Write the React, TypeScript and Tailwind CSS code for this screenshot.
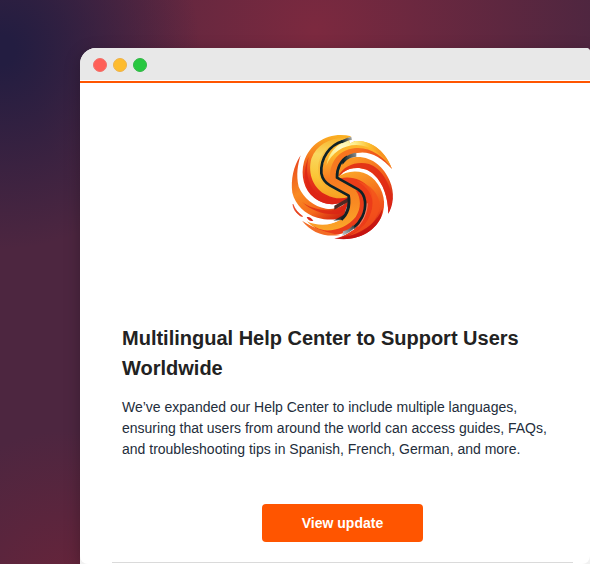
import React from 'react';

interface Update {
  title: string;
  description: string;
  href: string;
}

const update: Update = {
  title: 'Multilingual Help Center to Support Users Worldwide',
  description:
    'We’ve expanded our Help Center to include multiple languages, ensuring that users from around the world can access guides, FAQs, and troubleshooting tips in Spanish, French, German, and more.',
  href: '#update',
};

const Logo: React.FC = () => {
  return (
    <svg viewBox="0 0 375 375" className="w-[125px] h-[125px]" fill="none" aria-hidden="true">
      <defs>
        <linearGradient id="leftOuter" x1="60" y1="90" x2="190" y2="285" gradientUnits="userSpaceOnUse">
          <stop offset="0" stopColor="#e9431c" />
          <stop offset="0.4" stopColor="#f98a22" />
          <stop offset="0.7" stopColor="#f56a1c" />
          <stop offset="1" stopColor="#c9150f" />
        </linearGradient>
        <linearGradient id="leftBand" x1="160" y1="30" x2="130" y2="240" gradientUnits="userSpaceOnUse">
          <stop offset="0" stopColor="#fbb022" />
          <stop offset="0.35" stopColor="#f57a20" />
          <stop offset="0.65" stopColor="#e7361b" />
          <stop offset="1" stopColor="#d91c12" />
        </linearGradient>
        <linearGradient id="yellow" x1="170" y1="40" x2="150" y2="215" gradientUnits="userSpaceOnUse">
          <stop offset="0" stopColor="#f7b52e" />
          <stop offset="0.3" stopColor="#f9d860" />
          <stop offset="0.7" stopColor="#fbc535" />
          <stop offset="1" stopColor="#f7a022" />
        </linearGradient>
        <radialGradient id="glow" cx="188" cy="72" r="115" gradientUnits="userSpaceOnUse">
          <stop offset="0" stopColor="#fffbd2" />
          <stop offset="0.35" stopColor="#fdee8c" />
          <stop offset="0.7" stopColor="#fbc02f" />
          <stop offset="1" stopColor="#f79421" />
        </radialGradient>
        <linearGradient id="topBand" x1="160" y1="160" x2="335" y2="130" gradientUnits="userSpaceOnUse">
          <stop offset="0" stopColor="#f77a20" />
          <stop offset="0.5" stopColor="#f6701f" />
          <stop offset="1" stopColor="#ea421b" />
        </linearGradient>
        <linearGradient id="rightBand" x1="230" y1="100" x2="325" y2="260" gradientUnits="userSpaceOnUse">
          <stop offset="0" stopColor="#fb9724" />
          <stop offset="0.5" stopColor="#f25a1d" />
          <stop offset="1" stopColor="#c61515" />
        </linearGradient>
        <linearGradient id="body" x1="210" y1="140" x2="270" y2="330" gradientUnits="userSpaceOnUse">
          <stop offset="0" stopColor="#fba428" />
          <stop offset="0.35" stopColor="#f6761f" />
          <stop offset="0.7" stopColor="#ef4a1b" />
          <stop offset="1" stopColor="#c31110" />
        </linearGradient>
        <linearGradient id="center" x1="170" y1="90" x2="200" y2="320" gradientUnits="userSpaceOnUse">
          <stop offset="0" stopColor="#fdb52b" />
          <stop offset="0.3" stopColor="#f77a20" />
          <stop offset="0.65" stopColor="#f98a22" />
          <stop offset="1" stopColor="#fbab2b" />
        </linearGradient>
        <linearGradient id="inkTop" x1="185" y1="50" x2="216" y2="38" gradientUnits="userSpaceOnUse">
          <stop offset="0" stopColor="#0e2227" />
          <stop offset="0.5" stopColor="#5a5d58" />
          <stop offset="1" stopColor="#b9b9b4" />
        </linearGradient>
        <linearGradient id="inkMiddle" x1="190" y1="105" x2="230" y2="90" gradientUnits="userSpaceOnUse">
          <stop offset="0" stopColor="#0e2227" />
          <stop offset="1" stopColor="#8b8d8c" />
        </linearGradient>
        <linearGradient id="inkBottom" x1="230" y1="295" x2="188" y2="330" gradientUnits="userSpaceOnUse">
          <stop offset="0" stopColor="#0e2227" />
          <stop offset="1" stopColor="#c3c7c9" />
        </linearGradient>
      </defs>

      {/* left side */}
      <path d="M62 91C40 124 32 164 37 203C46 240 75 267 112 278C139 286 165 285 190 279L207 222C190 246 164 255 138 251C101 244 71 220 56 185C48 150 53 119 62 91Z" fill="url(#leftOuter)" />
      <path d="M66 230C94 258 136 271 174 267C194 260 204 244 207 225C189 246 167 257 144 256C112 254 85 246 66 230Z" fill="#d92114" opacity="0.75" />
      <path d="M214 34C155 18 91 48 72 110C61 151 72 195 103 219C131 241 178 247 207 216L205 198L140 165L125 120L160 60Z" fill="url(#leftBand)" />
      <path d="M86 95C76 135 81 174 107 202C132 224 169 230 205 217C185 240 151 244 120 229C75 203 63 151 86 95Z" fill="#dc2416" opacity="0.8" />
      <path d="M206 39C155 34 110 58 94 101C82 147 101 192 140 210C161 221 185 223 206 216L145 180L125 140L133 90L165 55Z" fill="url(#yellow)" />
      <path d="M203 41C155 49 117 84 114 127C114 158 127 183 149 196L205 215L144 180L125 140L133 90Z" fill="#f7a12a" opacity="0.35" />
      <path d="M163 242L207 217L203 232L163 254Z" fill="#4e2923" />

      {/* right side */}
      <path d="M172 157C170 124 193 97 228 96C277 94 312 127 329 167C345 204 340 240 325 266C324 218 311 176 282 149C256 124 214 124 190 142L176 158Z" fill="url(#rightBand)" />
      <path d="M174 155C191 121 230 108 267 117C304 130 330 174 337 221C335 240 331 253 325 266C324 218 311 176 282 149C256 124 214 124 190 142Z" fill="#df2714" opacity="0.85" />
      <path d="M172 158C200 135 243 133 274 156C304 181 320 222 309 262C294 316 236 352 163 340C192 337 225 319 241 292C259 263 263 231 251 211C234 194 205 178 172 158Z" fill="url(#body)" />
      <path d="M181 160C214 153 249 163 268 190C289 225 277 273 250 302C232 320 211 330 190 334L225 312L254 262L256 220L235 195Z" fill="#ec3c19" />
      <path d="M229 168C262 183 282 214 277 247C270 287 244 316 205 333C258 325 293 288 300 242C297 209 274 176 229 168Z" fill="#f4511b" opacity="0.8" />
      <path d="M308 250C294 285 262 317 210 332C199 336 182 339 163 340C223 352 282 324 303 277Z" fill="#c31110" opacity="0.8" />

      {/* top sweep */}
      <path d="M204 43C160 53 125 95 127 142C129 160 137 174 150 181L207 211L225 190L172 159C168 123 188 91 228 84C265 73 306 94 336 132C318 80 275 44 225 48L211 55Z" fill="url(#center)" />
      <path d="M204 45C170 57 145 84 139 122C154 83 190 60 229 60C270 60 309 88 336 132C319 82 276 45 226 48L211 55Z" fill="url(#glow)" />
      <path d="M150 158C149 108 179 75 222 70C268 64 309 92 336 132C305 97 268 76 231 84C190 90 167 120 170 158L188 172L178 180Z" fill="url(#topBand)" />

      {/* lower sweep */}
      <path d="M171 163L243 200C263 221 258 262 239 292C222 314 195 327 163 328C128 326 98 309 78 286C114 302 151 300 181 285C203 264 210 241 207 211L158 183Z" fill="url(#center)" />
      <path d="M227 196C244 220 244 250 227 276C205 304 170 318 134 316C121 314 110 309 101 304C122 324 148 332 177 328C208 322 234 304 250 277C260 250 260 221 243 200Z" fill="#e93c19" />
      <path d="M62 266C93 284 140 292 178 284C153 303 112 304 78 288Z" fill="#ffffff" />

      {/* ink lines */}
      <path d="M188 49C150 60 121 98 124 145C127 162 138 175 151 182L206 212C211 244 201 269 184 284" stroke="#0e2227" strokeWidth="8" strokeLinejoin="round" />
      <path d="M192 269C199 255 202 241 204 222L210 214C212 245 206 267 184 285L160 287Z" fill="#142226" opacity="0.8" />
      <path d="M184 51L202 43L215 40" stroke="url(#inkTop)" strokeWidth="9" />
      <path d="M203 95C183 105 170 130 171 158L234 193C260 209 260 247 247 275C240 289 231 300 220 309" stroke="#0e2227" strokeWidth="8" strokeLinejoin="round" />
      <path d="M186 112C195 94 210 85 229 83L229 95C212 96 198 104 188 119Z" fill="url(#inkMiddle)" />
      <path d="M225 307C216 317 203 326 187 333L189 319C203 316 212 309 219 301Z" fill="url(#inkBottom)" />
      <path d="M262 235C261 262 250 287 234 305" stroke="#f7d9cd" strokeWidth="2" opacity="0.7" />

      {/* loose strokes */}
      <path d="M39 238C44 253 55 264 68 274C66 275 63 274 60 272C47 263 40 251 39 238Z" fill="#e7411c" stroke="#e7411c" strokeWidth="2" />
      <path d="M80 277C87 274 94 279 100 287C92 290 84 286 80 277Z" fill="#d9281b" />
      <path d="M66 287C95 323 132 337 181 330C144 324 103 310 66 287Z" fill="#f36c25" />
    </svg>
  );
};

const TitleBar: React.FC = () => {
  return (
    <div className="flex items-center gap-[6px] h-8 pl-[13px] pt-[2px] bg-[#e8e8e8]">
      <span className="w-[14px] h-[14px] rounded-full bg-[#ff5f57] border border-[#f0706a]" />
      <span className="w-[14px] h-[14px] rounded-full bg-[#febc2e] border border-[#ecb24c]" />
      <span className="w-[14px] h-[14px] rounded-full bg-[#28c840] border border-[#34b648]" />
    </div>
  );
};

const UpdateEmail: React.FC<{ update: Update }> = ({ update }) => {
  return (
    <article className="ml-8 mr-[17px] pt-[42px]">
      <div className="flex justify-center">
        <Logo />
      </div>
      <div className="px-[10px] mt-[73px]">
        <h1 className="text-[20px] leading-[30px] font-bold text-[#222222]">{update.title}</h1>
        <p className="mt-[14px] text-[14px] leading-[21px] text-[#232d3b]">{update.description}</p>
      </div>
      <div className="flex justify-center mt-11 mb-5">
        <a
          href={update.href}
          className="px-10 py-2 text-[14px] leading-[22px] font-bold text-white bg-[#ff5500] rounded hover:bg-[#e64d00]"
        >
          View update
        </a>
      </div>
      <hr className="border-[#dadada]" />
    </article>
  );
};

const App: React.FC = () => {
  return (
    <main className="flex min-h-screen pt-12 pl-20 overflow-hidden font-['Liberation_Sans',Arial,sans-serif] bg-[#4d2640] bg-[radial-gradient(circle_at_0px_50px,#231d41_0px,#231d41_15px,transparent_200px),radial-gradient(circle_at_315px_30px,#7c293f_0px,transparent_290px),radial-gradient(circle_at_70px_600px,#69243a_0px,transparent_170px)]">
      <div className="flex flex-col flex-1 bg-[#f1f1f1] rounded-tl-[16px] rounded-tr-[4px] overflow-hidden shadow-[0_4px_16px_rgba(0,0,0,0.25)]">
        <TitleBar />
        <div className="flex-1 bg-white pt-px rounded-b-lg">
          <div className="h-[2px] bg-[#ff5500]" />
          <UpdateEmail update={update} />
        </div>
      </div>
    </main>
  );
};

export default App;
